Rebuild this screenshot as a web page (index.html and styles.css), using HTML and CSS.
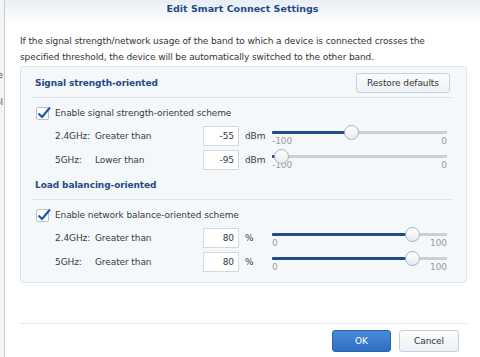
FILE: index.html
```html
<!DOCTYPE html>
<html>
<head>
<meta charset="utf-8">
<link rel="stylesheet" href="styles.css">
</head>
<body>
<div class="screen">
  <div class="backdrop">
    <span class="bd-line bd-1">e</span>
    <span class="bd-line bd-2">ol</span>
  </div>
  <div class="dialog">
    <div class="header">Edit Smart Connect Settings</div>
    <p class="desc">If the signal strength/network usage of the band to which a device is connected crosses the specified threshold, the device will be automatically switched to the other band.</p>
    <div class="panel">
      <div class="sec-head">
        <span class="sec-title">Signal strength-oriented</span>
        <button class="btn btn-restore">Restore defaults</button>
      </div>
      <div class="sep"></div>
      <label class="check-row">
        <span class="checkbox"><svg width="16" height="16" viewBox="0 0 16 16"><path d="M2.5 8.5 L6 12 L14 2.5" fill="none" stroke="#1f5aa3" stroke-width="2.2" stroke-linejoin="round"/></svg></span>
        Enable signal strength-oriented scheme
      </label>
      <div class="row">
        <span class="band">2.4GHz:</span><span class="cond">Greater than</span>
        <span class="input">-55</span><span class="unit">dBm</span>
        <div class="slider">
          <div class="track"><div class="fill" style="width:45%"></div><div class="knob" style="left:45%"></div></div>
          <div class="scale"><span>-100</span><span>0</span></div>
        </div>
      </div>
      <div class="row">
        <span class="band">5GHz:</span><span class="cond">Lower than</span>
        <span class="input">-95</span><span class="unit">dBm</span>
        <div class="slider">
          <div class="track"><div class="fill" style="width:5%"></div><div class="knob" style="left:5%"></div></div>
          <div class="scale"><span>-100</span><span>0</span></div>
        </div>
      </div>
      <div class="sec-head sec-head-2">
        <span class="sec-title">Load balancing-oriented</span>
      </div>
      <div class="sep"></div>
      <label class="check-row">
        <span class="checkbox"><svg width="16" height="16" viewBox="0 0 16 16"><path d="M2.5 8.5 L6 12 L14 2.5" fill="none" stroke="#1f5aa3" stroke-width="2.2" stroke-linejoin="round"/></svg></span>
        Enable network balance-oriented scheme
      </label>
      <div class="row">
        <span class="band">2.4GHz:</span><span class="cond">Greater than</span>
        <span class="input">80</span><span class="unit">%</span>
        <div class="slider">
          <div class="track"><div class="fill" style="width:80%"></div><div class="knob" style="left:80%"></div></div>
          <div class="scale"><span>0</span><span>100</span></div>
        </div>
      </div>
      <div class="row">
        <span class="band">5GHz:</span><span class="cond">Greater than</span>
        <span class="input">80</span><span class="unit">%</span>
        <div class="slider">
          <div class="track"><div class="fill" style="width:80%"></div><div class="knob" style="left:80%"></div></div>
          <div class="scale"><span>0</span><span>100</span></div>
        </div>
      </div>
    </div>
    <div class="footer">
      <button class="btn btn-primary">OK</button>
      <button class="btn btn-cancel">Cancel</button>
    </div>
  </div>
</div>
</body>
</html>
```
FILE: styles.css
```css
* { box-sizing: border-box; }
html, body { margin: 0; padding: 0; }
body {
  width: 480px;
  height: 357px;
  overflow: hidden;
  background: #fff;
  font-family: "DejaVu Sans", Verdana, sans-serif;
  font-size: 9px;
  letter-spacing: -0.1px;
  color: #3a3a3a;
}
.screen { display: flex; height: 357px; }
.backdrop {
  width: 5px;
  flex: none;
  background: #f3f4f6;
  border-right: 1px solid #c9cdd2;
  position: relative;
  overflow: hidden;
  color: #555;
}
.bd-line { position: absolute; right: 1px; white-space: nowrap; }
.bd-1 { top: 70px; }
.bd-2 { top: 97px; }
.dialog { flex: 1; display: flex; flex-direction: column; }
.header {
  height: 24px;
  padding-top: 3px;
  text-align: center;
  font-weight: bold;
  color: #1f4a85;
  font-size: 9.5px;
  letter-spacing: 0;
  line-height: 12px;
  background: linear-gradient(#e8eef5, #ffffff);
}
.desc {
  margin: 9px 0 0 15px;
  width: 440px;
  line-height: 16px;
  color: #333;
}
.panel {
  margin: 1px 0 0 15px;
  width: 447px;
  height: 217px;
  border: 1px solid #dfe5ec;
  border-radius: 3px;
  background: #f5f8fb;
  padding: 6px 14px 0 11px;
}
.sec-head { display: flex; align-items: center; justify-content: space-between; height: 20px; }
.sec-head-2 { margin-top: 3px; }
.sec-title { font-weight: bold; color: #1f4a85; padding-left: 3px; }
.sep { height: 1px; background: #dde3ea; margin-top: 4px; }
.btn {
  font-family: inherit;
  font-size: 9px;
  letter-spacing: -0.1px;
  color: #333;
  height: 20px;
  padding: 0 10px;
  border: 1px solid #c8d0d9;
  border-radius: 3px;
  background: linear-gradient(#fbfcfd, #eef1f5);
}
.btn-restore { width: 94px; margin-right: 2px; padding: 0; }
.check-row { display: flex; align-items: center; height: 22px; margin-top: 4px; padding-left: 4px; }
.checkbox {
  width: 13px; height: 13px;
  border: 1px solid #b9c0c8;
  border-radius: 2px;
  background: #fff;
  margin-right: 6px;
  position: relative;
}
.checkbox svg { position: absolute; left: -1px; top: -3px; }
.row { display: flex; align-items: center; height: 24px; padding-left: 23px; }
.band { width: 40px; }
.cond { width: 108px; }
.input {
  width: 36px; height: 20px;
  border: 1px solid #d3d9e0;
  background: #fff;
  text-align: right;
  padding-right: 4px;
  line-height: 18px;
}
.unit { width: 33px; padding-left: 6px; }
.slider { width: 175px; height: 24px; padding-top: 7px; }
.track { height: 3px; background: #cfcfcf; position: relative; border-radius: 1px; }
.fill { height: 3px; background: #1f4f8a; border-radius: 1px; }
.knob {
  position: absolute;
  top: -6px;
  width: 15px; height: 15px;
  margin-left: -7px;
  border-radius: 50%;
  border: 1px solid #a9b1ba;
  background: linear-gradient(#ffffff, #e7eaee);
}
.scale { display: flex; justify-content: space-between; font-size: 9px; color: #9a9a9a; line-height: 10px; margin-top: 2px; }
.footer {
  margin: 40px 0 0 15px;
  width: 447px;
  border-top: 1px solid #e3e7eb;
  display: flex;
  justify-content: flex-end;
  gap: 8px;
  padding: 6px 8px 0 0;
}
.btn-primary {
  width: 59px; height: 22px;
  color: #fff;
  border-color: #2a62ac;
  background: linear-gradient(#4a8ad8, #2f6fc2);
}
.btn-cancel { width: 60px; height: 22px; }
```
